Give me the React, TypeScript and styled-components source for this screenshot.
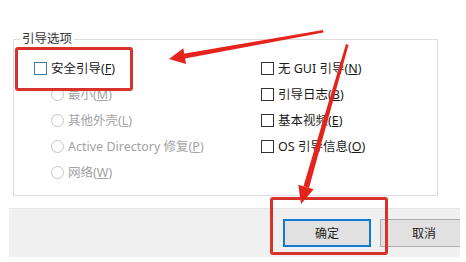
import React from 'react';
import styled, {createGlobalStyle} from 'styled-components';

const GlobalStyle = createGlobalStyle`
  html, body {
    margin: 0;
    padding: 0;
    background: #ffffff;
  }
  body {
    font-family: "Noto Sans", "Noto Sans CJK SC", sans-serif;
    font-size: 12px;
    color: #1a1a1a;
  }
`

type OptionType = {
    label: string
    key: string
    kind: 'check' | 'radio'
    disabled?: boolean
    focused?: boolean
}

const leftOptions: OptionType[] = [
    {label: '安全引导', key: 'F', kind: 'check', focused: true},
    {label: '最小', key: 'M', kind: 'radio', disabled: true},
    {label: '其他外壳', key: 'L', kind: 'radio', disabled: true},
    {label: 'Active Directory 修复', key: 'P', kind: 'radio', disabled: true},
    {label: '网络', key: 'W', kind: 'radio', disabled: true},
]

const rightOptions: OptionType[] = [
    {label: '无 GUI 引导', key: 'N', kind: 'check'},
    {label: '引导日志', key: 'B', kind: 'check'},
    {label: '基本视频', key: 'E', kind: 'check'},
    {label: 'OS 引导信息', key: 'O', kind: 'check'},
]

const Option = (props: { option: OptionType }) => {
    const {option} = props
    return (
        <Row indent={option.kind === 'radio'} disabled={!!option.disabled}>
            {option.kind === 'check'
                ? <CheckBox focused={!!option.focused}/>
                : <Radio/>}
            <Label>
                {option.label}(<u>{option.key}</u>)
            </Label>
        </Row>
    )
}

export default function App() {
    return (
        <Page>
            <GlobalStyle/>
            <Group>
                <Legend>引导选项</Legend>
                <Columns>
                    <Column>
                        {leftOptions.map(o => <Option key={o.key} option={o}/>)}
                    </Column>
                    <Column>
                        {rightOptions.map(o => <Option key={o.key} option={o}/>)}
                    </Column>
                </Columns>
            </Group>
            <ButtonBar>
                <Button primary>确定</Button>
                <Button>取消</Button>
            </ButtonBar>

            <Highlight style={{left: 15, top: 47, width: 118, height: 44}}/>
            <Highlight style={{left: 270, top: 197, width: 118, height: 58}}/>
            <Arrows width="466" height="262" viewBox="0 0 466 262">
                <polygon points="323,30 323.5,32.5 185,58.5 183.5,53.8" fill="#e5231d"/>
                <polygon points="169,59 183.3,48.2 186.1,64" fill="#e5231d"/>
                <polygon points="346,44 348.5,45 309,188 303.5,186" fill="#e5231d"/>
                <polygon points="301,204 298.3,184.8 313.7,189.2" fill="#e5231d"/>
            </Arrows>
        </Page>
    )
}

const Page = styled.div`
  position: relative;
  width: 466px;
  height: 262px;
  overflow: hidden;
  background: #ffffff;
  padding: 32px 6px 0 9px;
  box-sizing: border-box;
`

const Group = styled.fieldset`
  margin: 0 22px 0 4px;
  padding: 14px 0 4px 20px;
  border: 1px solid #dcdcdc;
  height: 164px;
  box-sizing: border-box;
  min-width: 0;
`

const Legend = styled.legend`
  padding: 0 2px;
  margin-left: -14px;
  color: #333333;
  font-size: 12.5px;
  line-height: 14px;
`

const Columns = styled.div`
  display: grid;
  grid-template-columns: 227px 1fr;
`

const Column = styled.div`
  display: flex;
  flex-direction: column;
  gap: 9px;
`

const Row = styled.div<{ indent: boolean, disabled: boolean }>`
  display: flex;
  align-items: center;
  gap: 4px;
  height: 17px;
  padding-left: ${(p) => p.indent ? '17px' : '0'};
  color: ${(p) => p.disabled ? '#a3a3a3' : '#1a1a1a'};
`

const CheckBox = styled.span<{ focused: boolean }>`
  width: 11px;
  height: 11px;
  border: 1px solid ${(p) => p.focused ? '#3e7ca6' : '#333333'};
  background: #ffffff;
  flex-shrink: 0;
`

const Radio = styled.span`
  width: 11px;
  height: 11px;
  border: 1px solid #c4c4c4;
  border-radius: 50%;
  flex-shrink: 0;
`

const Label = styled.span`
  font-size: 12.5px;
  line-height: 17px;
  white-space: nowrap;
  u {
    text-underline-offset: 1px;
  }
`

const ButtonBar = styled.div`
  margin-top: 12px;
  height: 49px;
  width: 451px;
  background: #f0f0f0;
  border-top: 1px solid #e6e6e6;
  box-sizing: border-box;
  display: flex;
  align-items: flex-start;
  padding: 10px 0 0 274px;
  gap: 9px;
  overflow: hidden;
`

const Button = styled.div<{ primary?: boolean }>`
  flex-shrink: 0;
  width: 88px;
  height: 28px;
  box-sizing: border-box;
  background: #e1e1e1;
  border: ${(p) => p.primary ? '2px solid #0f7ad0' : '1px solid #adadad'};
  display: flex;
  align-items: center;
  justify-content: center;
  font-size: 12px;
  color: #1a1a1a;
`

const Highlight = styled.div`
  position: absolute;
  box-sizing: border-box;
  border: 3px solid #d9322d;
  border-radius: 3px;
`

const Arrows = styled.svg`
  position: absolute;
  left: 0;
  top: 0;
  pointer-events: none;
`
